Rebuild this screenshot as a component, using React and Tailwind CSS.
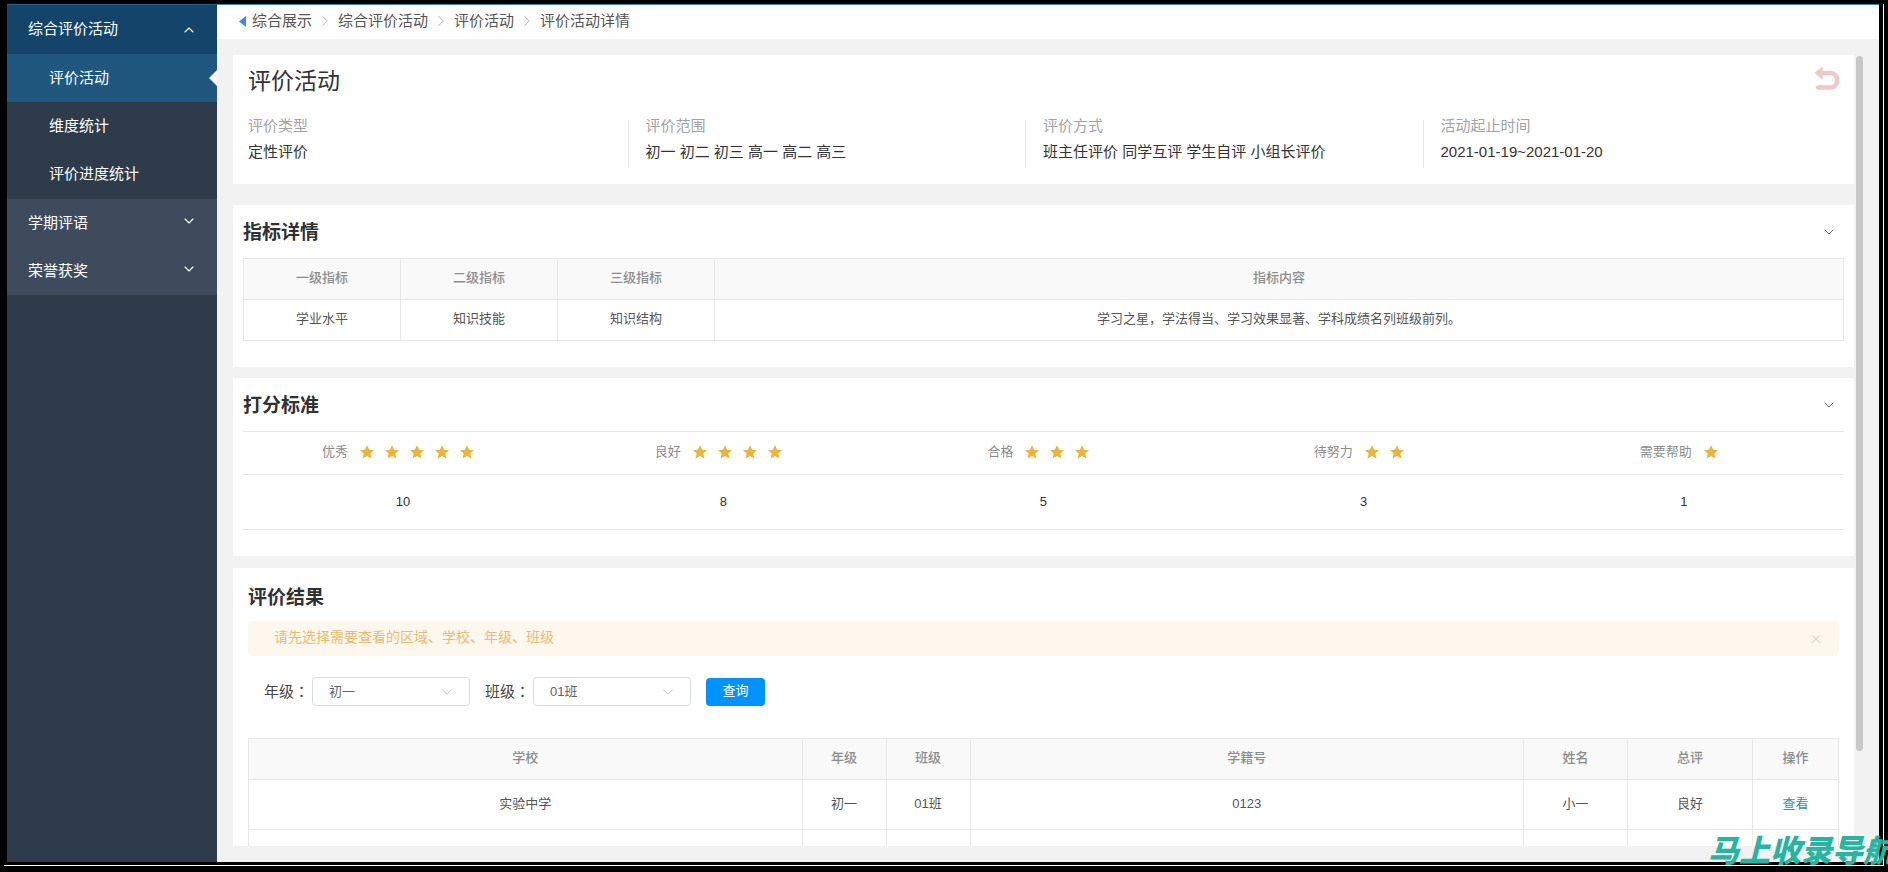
import { useState } from "react";
import { ChevronDown, ChevronRight, ChevronUp, X } from "lucide-react";

const subMenu = ["评价活动", "维度统计", "评价进度统计"];
const groups = ["学期评语", "荣誉获奖"];
const crumbs = ["综合展示", "综合评价活动", "评价活动", "评价活动详情"];

const info = [
  { label: "评价类型", value: "定性评价" },
  { label: "评价范围", value: "初一 初二 初三 高一 高二 高三" },
  { label: "评价方式", value: "班主任评价 同学互评 学生自评 小组长评价" },
  { label: "活动起止时间", value: "2021-01-19~2021-01-20" },
];

const levels = [
  { name: "优秀", stars: 5, score: 10 },
  { name: "良好", stars: 4, score: 8 },
  { name: "合格", stars: 3, score: 5 },
  { name: "待努力", stars: 2, score: 3 },
  { name: "需要帮助", stars: 1, score: 1 },
];

const resultHead = ["学校", "年级", "班级", "学籍号", "姓名", "总评", "操作"];
const results = [["实验中学", "初一", "01班", "0123", "小一", "良好"]];

function Star() {
  return (
    <svg viewBox="0 0 24 24" className="mr-[11px] size-[14px] fill-[#e9b53f]">
      <path d="M12 0l3.6 8 8.4.9-6.300 5.700 1.900 8.600L12 18.800 4.400 23.200l1.900-8.600L0 8.900 8.400 8z" />
    </svg>
  );
}

function Sidebar() {
  return (
    <nav className="w-[210px] shrink-0 border-t border-[#1c6390] bg-[#2d3b4a] text-[15px] text-white">
      <button className="flex h-[49px] w-full items-center justify-between bg-[#14446a] pr-5 pl-[21px]">
        综合评价活动
        <ChevronUp size={16} strokeWidth={1.6} />
      </button>
      <ul className="pb-px">
        {subMenu.map((item, i) => (
          <li key={item}>
            <a
              href="#"
              className={
                i === 0
                  ? "flex h-12 items-center justify-between bg-[#20577f] pl-[42px]"
                  : "flex h-12 items-center pl-[42px]"
              }
            >
              {item}
              {i === 0 && (
                <svg viewBox="0 0 8 16" className="h-4 w-2 fill-[#f2f7fc]">
                  <path d="M8 0v16L0 8z" />
                </svg>
              )}
            </a>
          </li>
        ))}
      </ul>
      {groups.map((item) => (
        <button
          key={item}
          className="flex h-12 w-full items-center justify-between bg-[#3d4b5c] pr-5 pl-[21px]"
        >
          {item}
          <ChevronDown size={16} strokeWidth={1.6} className="mb-1" />
        </button>
      ))}
    </nav>
  );
}

function Breadcrumb() {
  return (
    <header className="flex h-[35px] shrink-0 items-center border-t border-[#3c8ba8] bg-white pb-0.5 pl-[22px] text-[15px] text-[#555]">
      <svg viewBox="0 0 7 11" className="mr-1.5 h-[11px] w-[7px] fill-[#3b8fd0]">
        <path d="M7 0v11L0 5.500z" />
      </svg>
      {crumbs.map((item, i) => (
        <span key={item} className="flex items-center">
          {i > 0 && (
            <ChevronRight size={18} strokeWidth={1.4} className="mx-1 text-[#bbb]" />
          )}
          <a href="#">{item}</a>
        </span>
      ))}
    </header>
  );
}

function Summary() {
  return (
    <section className="bg-white pr-4 pb-4 pl-[15px]">
      <div className="flex items-start justify-between pt-[9px]">
        <h1 className="text-[23px] leading-[34px] text-[#333]">评价活动</h1>
        <button aria-label="返回" className="-mr-0.5 pt-0.5">
          <svg viewBox="0 0 26 25" className="h-[25px] w-[26px]">
            <path
              d="M7 7h9.500a6.800 7.200 0 0 1 0 14.500H4"
              fill="none"
              stroke="#efc9c5"
              strokeWidth="4.4"
              strokeLinecap="round"
            />
            <path
              d="M1.500 7L8 1.800v10.400z"
              fill="#efc9c5"
              stroke="#efc9c5"
              strokeWidth="1.500"
              strokeLinejoin="round"
            />
          </svg>
        </button>
      </div>
      <dl className="mt-[22px] grid grid-cols-4 text-[15px]">
        {info.map((item, i) => (
          <div
            key={item.label}
            className={
              i < 3 ? "mr-[17px] h-12 border-r border-[#e8e8e8]" : "h-12"
            }
          >
            <dt className="-mt-1.5 leading-[24px] text-[#a3a3a3]">{item.label}</dt>
            <dd className="mt-0.5 leading-[24px] text-[#333]">{item.value}</dd>
          </div>
        ))}
      </dl>
    </section>
  );
}

function Panel({ title, children }) {
  const [open, setOpen] = useState(true);

  return (
    <section className="bg-white px-2.5 pb-[26px]">
      <button
        onClick={() => setOpen(!open)}
        className="flex h-[53px] w-full items-center justify-between pr-[7px] text-[#303133]"
      >
        <h2 className="pt-[3px] text-[19px] font-bold">{title}</h2>
        <ChevronDown size={16} strokeWidth={1.3} className="text-[#555]" />
      </button>
      {open && children}
    </section>
  );
}

function IndexTable() {
  return (
    <table className="w-full table-fixed border-collapse text-center text-[13px] text-[#555]">
      <colgroup>
        <col className="w-[157px]" />
        <col className="w-[157px]" />
        <col className="w-[157px]" />
        <col />
      </colgroup>
      <thead>
        <tr className="h-[41px] bg-[#f9f9f9] text-[#8c8c8c]">
          {["一级指标", "二级指标", "三级指标", "指标内容"].map((h) => (
            <th key={h} className="border border-[#e8e8e8] pb-0.5 font-medium">
              {h}
            </th>
          ))}
        </tr>
      </thead>
      <tbody>
        <tr className="h-[41px]">
          <td className="border border-[#e8e8e8] pb-0.5">学业水平</td>
          <td className="border border-[#e8e8e8] pb-0.5">知识技能</td>
          <td className="border border-[#e8e8e8] pb-0.5">知识结构</td>
          <td className="border border-[#e8e8e8] pb-0.5">
            学习之星，学法得当、学习效果显著、学科成绩名列班级前列。
          </td>
        </tr>
      </tbody>
    </table>
  );
}

function ScoreTable() {
  return (
    <table className="w-full table-fixed border-collapse text-[13px]">
      <thead>
        <tr className="h-[43px] border-y border-[#e8e8e8] text-[#8c8c8c]">
          {levels.map((l) => (
            <th key={l.name} className="pb-0.5 pl-px font-normal">
              <div className="flex items-center justify-center">
                <span className="mr-3">{l.name}</span>
                {Array.from({ length: l.stars }, (_, i) => (
                  <Star key={i} />
                ))}
              </div>
            </th>
          ))}
        </tr>
      </thead>
      <tbody>
        <tr className="h-[55px] border-b border-[#e8e8e8] text-center text-[#333]">
          {levels.map((l) => (
            <td key={l.name}>{l.score}</td>
          ))}
        </tr>
      </tbody>
    </table>
  );
}

function Filter({ id, label, options }) {
  return (
    <div className="flex items-center">
      <label htmlFor={id} className="w-12 text-[15px] text-[#444]">
        {label}
        <span className="font-['Noto_Sans_CJK_TC',sans-serif]">：</span>
      </label>
      <div className="relative">
        <select
          id={id}
          className="block h-[29px] w-[158px] appearance-none rounded border border-[#d9dce2] bg-white pl-4 text-[13px] text-[#606266]"
        >
          {options.map((o) => (
            <option key={o}>{o}</option>
          ))}
        </select>
        <ChevronDown
          size={18}
          strokeWidth={1.2}
          className="pointer-events-none absolute top-1.5 right-[14px] text-[#b4b8c0]"
        />
      </div>
    </div>
  );
}

function Results() {
  const [tip, setTip] = useState(true);

  return (
    <section className="min-h-0 flex-1 overflow-hidden bg-white px-[15px]">
      <h2 className="pt-[13px] pb-1.5 text-[19px] leading-[34px] font-bold text-[#303133]">
        评价结果
      </h2>
      {tip && (
        <div className="flex h-[35px] items-center justify-between rounded bg-[#fef7ed] pr-4 pl-[26px] text-[#e8bb72]">
          <p className="pb-0.5 text-[14px]">
            请先选择需要查看的区域、学校、年级、班级
          </p>
          <button aria-label="关闭" onClick={() => setTip(false)}>
            <X size={14} strokeWidth={1.8} className="text-[#cfcfc8]" />
          </button>
        </div>
      )}
      <form className="flex items-center gap-[15px] py-[21px] pl-4">
        <Filter id="grade" label="年级" options={["初一", "初二", "初三"]} />
        <Filter id="class" label="班级" options={["01班", "02班"]} />
        <button
          type="button"
          className="h-7 w-[59px] rounded bg-[#0092ff] pb-px text-[13px] text-white"
        >
          查询
        </button>
      </form>
      <table className="mt-[11px] w-full table-fixed border-collapse text-center text-[13px] text-[#555]">
        <colgroup>
          <col />
          <col className="w-[84px]" />
          <col className="w-[84px]" />
          <col />
          <col className="w-[104px]" />
          <col className="w-[125px]" />
          <col className="w-[86px]" />
        </colgroup>
        <thead>
          <tr className="h-[41px] bg-[#f9f9f9] text-[#8c8c8c]">
            {resultHead.map((h) => (
              <th key={h} className="border border-[#e8e8e8] pb-0.5 font-medium">
                {h}
              </th>
            ))}
          </tr>
        </thead>
        <tbody>
          {results.map((row) => (
            <tr key={row[3]} className="h-[50px]">
              {row.map((cell, i) => (
                <td key={i} className="border border-[#e8e8e8] pb-0.5">
                  {cell}
                </td>
              ))}
              <td className="border border-[#e8e8e8] pb-0.5">
                <a href="#" className="text-[#2b93b3]">
                  查看
                </a>
              </td>
            </tr>
          ))}
          {/* next row, cut off by the scroll area */}
          <tr className="h-[50px]">
            {resultHead.map((h) => (
              <td key={h} className="border border-[#e8e8e8]" />
            ))}
          </tr>
        </tbody>
      </table>
    </section>
  );
}

export default function App() {
  return (
    <div className="relative h-screen overflow-hidden bg-black px-1 pt-1 pb-1.5 font-['Liberation_Sans','Noto_Sans_CJK_SC',sans-serif]">
      <div className="flex h-full border-r border-b border-white pr-1 pb-[3px] pl-[3px]">
        <Sidebar />
        <div className="flex min-w-0 flex-1 flex-col bg-[#f2f2f2]">
          <Breadcrumb />
          <div className="flex min-h-0 flex-1 p-4">
            <main className="flex min-w-0 flex-1 flex-col">
              <Summary />
              <div className="mt-[21px] mb-3 flex flex-col gap-[11px]">
                <Panel title="指标详情">
                  <IndexTable />
                </Panel>
                <Panel title="打分标准">
                  <ScoreTable />
                </Panel>
              </div>
              <Results />
            </main>
            <div className="ml-0.5 w-[7px] pt-px">
              <div className="h-[88%] rounded-full bg-[#c8c8c8]" />
            </div>
          </div>
        </div>
      </div>
      <p className="absolute right-[-6px] bottom-0.5 text-[31px] leading-[36px] font-black whitespace-nowrap text-[#27b5a1] italic">
        马上收录导航
      </p>
    </div>
  );
}
